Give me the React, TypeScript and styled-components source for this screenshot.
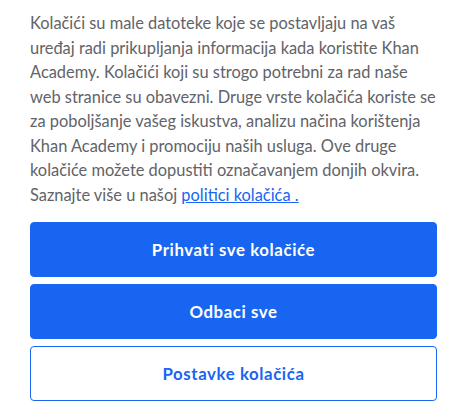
import React, { ReactElement } from 'react';
import styled, { createGlobalStyle } from 'styled-components';

const GlobalStyle = createGlobalStyle`
  body {
    margin: 0;
    background: #fff;
    font-family: Lato, 'Noto Sans', sans-serif;
  }
`;

const Banner = styled.section`
  display: flex;
  flex-direction: column;
  padding: 11px 30px 0;
  width: 407px;
`;

const Description = styled.p`
  margin: 0;
  font-size: 16.4px;
  line-height: 24.55px;
  color: #616368;
`;

const PolicyLink = styled.a`
  color: #1865f2;
  text-decoration: underline;
`;

const Actions = styled.div`
  display: flex;
  flex-direction: column;
  gap: 7px;
  margin-top: 15px;
`;

const Button = styled.button<{ $secondary?: boolean }>`
  height: 55px;
  border-radius: 4px;
  border: 1px solid #1865f2;
  background: ${({ $secondary }) => ($secondary ? '#fff' : '#1865f2')};
  color: ${({ $secondary }) => ($secondary ? '#1865f2' : '#fff')};
  font-family: Lato, 'Noto Sans', sans-serif;
  font-weight: 700;
  font-size: 16.8px;
  letter-spacing: 0.6px;
  cursor: pointer;
`;

const App = (): ReactElement => (
  <>
    <GlobalStyle />
    <Banner>
      <Description>
        Kolačići su male datoteke koje se postavljaju na vaš uređaj radi
        prikupljanja informacija kada koristite Khan Academy. Kolačići koji su
        strogo potrebni za rad naše web stranice su obavezni. Druge vrste
        kolačića koriste se za poboljšanje vašeg iskustva, analizu načina
        korištenja Khan Academy i promociju naših usluga. Ove druge kolačiće
        možete dopustiti označavanjem donjih okvira. Saznajte više u našoj{' '}
        <PolicyLink href="#">politici kolačića .</PolicyLink>
      </Description>
      <Actions>
        <Button>Prihvati sve kolačiće</Button>
        <Button>Odbaci sve</Button>
        <Button $secondary>Postavke kolačića</Button>
      </Actions>
    </Banner>
  </>
);

export default App;
